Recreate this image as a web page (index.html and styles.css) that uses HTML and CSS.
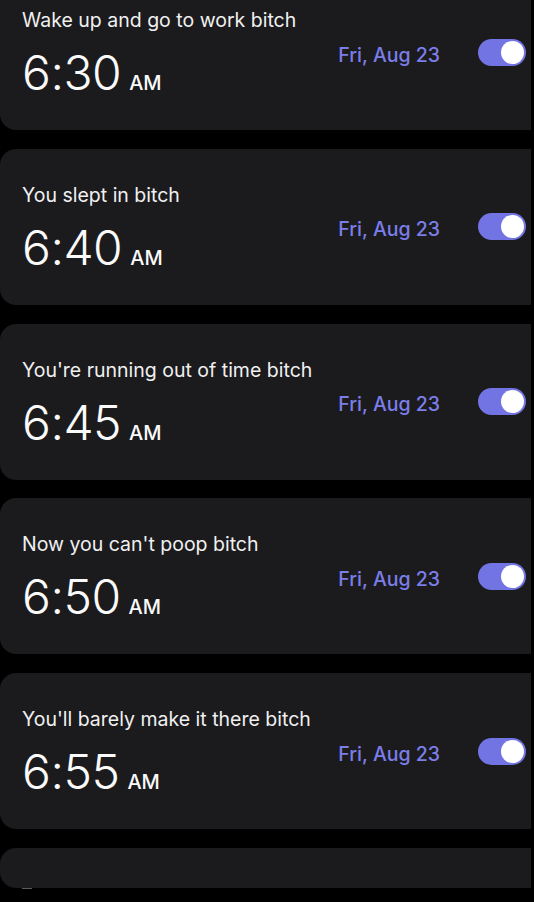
FILE: index.html
```html
<!DOCTYPE html>
<html>
<head>
<meta charset="utf-8">
<link rel="stylesheet" href="styles.css">
</head>
<body>
<div class="list">
  <div class="card">
    <div class="info">
      <div class="label">Wake up and go to work bitch</div>
      <div class="time"><span class="hm">6:30</span><span class="ampm">AM</span></div>
    </div>
    <div class="date">Fri, Aug 23</div>
    <div class="toggle"><div class="knob"></div></div>
  </div>
  <div class="card">
    <div class="info">
      <div class="label">You slept in bitch</div>
      <div class="time"><span class="hm">6:40</span><span class="ampm">AM</span></div>
    </div>
    <div class="date">Fri, Aug 23</div>
    <div class="toggle"><div class="knob"></div></div>
  </div>
  <div class="card">
    <div class="info">
      <div class="label">You're running out of time bitch</div>
      <div class="time"><span class="hm">6:45</span><span class="ampm">AM</span></div>
    </div>
    <div class="date">Fri, Aug 23</div>
    <div class="toggle"><div class="knob"></div></div>
  </div>
  <div class="card">
    <div class="info">
      <div class="label">Now you can't poop bitch</div>
      <div class="time"><span class="hm">6:50</span><span class="ampm">AM</span></div>
    </div>
    <div class="date">Fri, Aug 23</div>
    <div class="toggle"><div class="knob"></div></div>
  </div>
  <div class="card">
    <div class="info">
      <div class="label">You'll barely make it there bitch</div>
      <div class="time"><span class="hm">6:55</span><span class="ampm">AM</span></div>
    </div>
    <div class="date">Fri, Aug 23</div>
    <div class="toggle"><div class="knob"></div></div>
  </div>
  <div class="card card-partial"></div>
  <div class="peek"></div>
</div>
</body>
</html>
```
FILE: styles.css
```css
html, body {
  margin: 0;
  padding: 0;
  background: #000;
  overflow: hidden;
  height: 902px;
}
body {
  font-family: Inter, "Noto Sans", sans-serif;
  color: #f2f2f2;
}
.list {
  display: flex;
  flex-direction: column;
  gap: 18.75px;
  margin-top: -26px;
  width: 531px;
}
.card {
  background: #1b1b1e;
  height: 156px;
  border-radius: 16px 0 0 16px;
  display: flex;
  align-items: center;
  padding: 0 5px 0 22px;
  box-sizing: border-box;
  flex-shrink: 0;
}
.card-partial {
  height: 40px;
}
.peek {
  width: 10px;
  height: 1px;
  background: #5a5a5c;
  margin: -18.75px 0 0 22px;
}
.info {
  flex: 1;
  align-self: flex-start;
  display: flex;
  flex-direction: column;
  padding-top: 34px;
}
.label {
  font-size: 19.5px;
  line-height: 24px;
  font-weight: 400;
  color: #f0f0f0;
}
.time {
  display: flex;
  align-items: baseline;
  margin-top: 15px;
  line-height: 52px;
}
.hm {
  font-size: 48px;
  font-weight: 300;
  letter-spacing: -0.5px;
  color: #fafafa;
}
.ampm {
  font-size: 20px;
  font-weight: 500;
  margin-left: 8px;
  color: #fafafa;
}
.date {
  font-size: 19.5px;
  font-weight: 500;
  color: #7b7ee9;
  margin-right: 38px;
  margin-top: 5px;
}
.toggle {
  width: 48px;
  height: 27px;
  border-radius: 14px;
  background: #7274e3;
  display: flex;
  align-items: center;
  justify-content: flex-end;
  padding: 0 2px;
  box-sizing: border-box;
}
.knob {
  width: 23px;
  height: 23px;
  border-radius: 50%;
  background: #fff;
}
```
